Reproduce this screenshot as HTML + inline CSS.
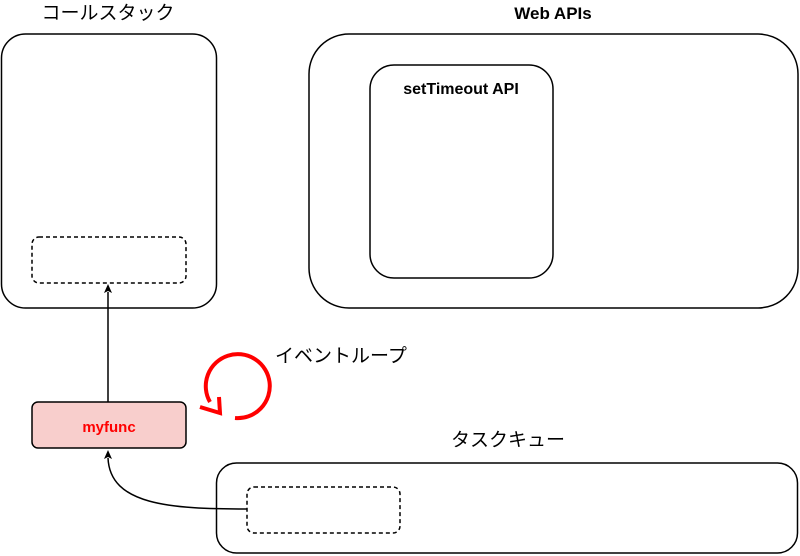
<!DOCTYPE html>
<html><head><meta charset="utf-8"><style>
html,body{margin:0;padding:0;background:#fff;width:800px;height:556px;overflow:hidden}
svg{display:block}
text{font-family:"Liberation Sans","Noto Sans CJK JP",sans-serif}
</style></head><body>
<svg width="800" height="556" viewBox="0 0 800 556" xmlns="http://www.w3.org/2000/svg">
<g fill="none" stroke="#000" stroke-width="1.5">
<rect x="1.5" y="34" width="215" height="274" rx="24"/>
<rect x="309" y="34" width="489" height="274" rx="40"/>
<rect x="370" y="65" width="183" height="213" rx="24"/>
<rect x="32" y="237" width="154" height="46" rx="7" stroke-dasharray="4 3"/>
<rect x="216.5" y="463" width="581" height="90" rx="20"/>
<rect x="247" y="487" width="153" height="46" rx="7" stroke-dasharray="4 3"/>
<line x1="108" y1="402" x2="108" y2="292"/>
<path d="M247,509 C170,509 110,505 108,458"/>
</g>
<path d="M108,284 L104,293 L108,291 L112,293 Z" fill="#000"/>
<path d="M108,450 L104,459 L108,457 L112,459 Z" fill="#000"/>
<rect x="32" y="402" width="154" height="46" rx="6" fill="#f8cecc" stroke="#000" stroke-width="1.5"/>
<text x="109" y="432" font-size="15" font-weight="bold" fill="#ff0000" text-anchor="middle">myfunc</text>
<path d="M235,418 A32,32 0 1 0 210,402" fill="none" stroke="#ff0000" stroke-width="4"/>
<path d="M200,407 L220,413 L219,397" fill="none" stroke="#ff0000" stroke-width="4"/>
<text x="108" y="19" font-size="19" text-anchor="middle">コールスタック</text>
<text x="553" y="19" font-size="17" font-weight="bold" text-anchor="middle">Web APIs</text>
<text x="461" y="94" font-size="16" font-weight="bold" text-anchor="middle">setTimeout API</text>
<text x="275" y="362" font-size="19">イベントループ</text>
<text x="508" y="446" font-size="19" text-anchor="middle">タスクキュー</text>
</svg>
</body></html>
